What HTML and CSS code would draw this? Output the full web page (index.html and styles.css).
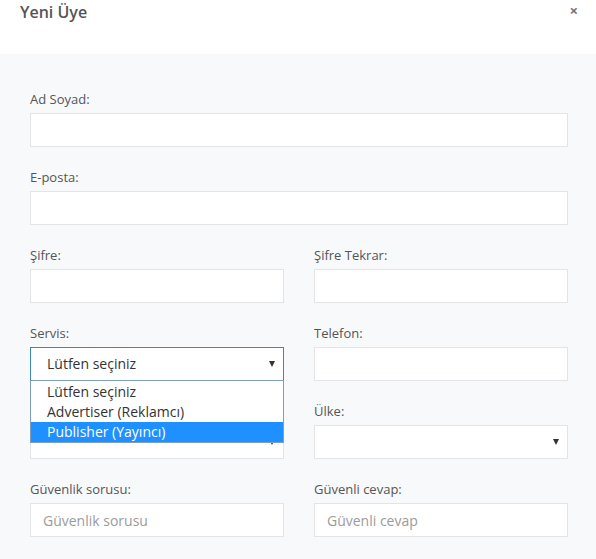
FILE: index.html
```html
<!DOCTYPE html>
<html lang="tr">
<head>
<meta charset="utf-8">
<title>Yeni Üye</title>
<link rel="stylesheet" href="styles.css">
</head>
<body>
<div class="modal">
  <div class="modal-header">
    <h4 class="modal-title">Yeni Üye</h4>
    <span class="close">×</span>
  </div>
  <div class="modal-body">
    <div class="field">
      <label class="label">Ad Soyad:</label>
      <input class="input" type="text">
    </div>
    <div class="field">
      <label class="label">E-posta:</label>
      <input class="input" type="text">
    </div>
    <div class="row">
      <div class="field">
        <label class="label">Şifre:</label>
        <input class="input" type="password">
      </div>
      <div class="field">
        <label class="label">Şifre Tekrar:</label>
        <input class="input" type="password">
      </div>
    </div>
    <div class="row">
      <div class="field">
        <label class="label">Servis:</label>
        <div class="select-wrap">
          <div class="select focused">Lütfen seçiniz</div>
          <span class="arrow"></span>
          <ul class="dropdown">
            <li class="option">Lütfen seçiniz</li>
            <li class="option">Advertiser (Reklamcı)</li>
            <li class="option selected">Publisher (Yayıncı)</li>
          </ul>
        </div>
      </div>
      <div class="field">
        <label class="label">Telefon:</label>
        <input class="input" type="text">
      </div>
    </div>
    <div class="row">
      <div class="field">
        <label class="label"></label>
        <div class="select-wrap">
          <div class="select"></div>
          <span class="arrow"></span>
        </div>
      </div>
      <div class="field">
        <label class="label">Ülke:</label>
        <div class="select-wrap">
          <div class="select"></div>
          <span class="arrow"></span>
        </div>
      </div>
    </div>
    <div class="row">
      <div class="field">
        <label class="label">Güvenlik sorusu:</label>
        <input class="input" type="text" placeholder="Güvenlik sorusu">
      </div>
      <div class="field">
        <label class="label">Güvenli cevap:</label>
        <input class="input" type="text" placeholder="Güvenli cevap">
      </div>
    </div>
  </div>
</div>
</body>
</html>
```

FILE: styles.css
```css
* { box-sizing: border-box; }
html, body { margin: 0; padding: 0; }
body {
  font-family: "Open Sans", "Noto Sans", sans-serif;
  background: #f8f9fb;
  color: #555;
  width: 596px;
  height: 559px;
  overflow: hidden;
}
.modal-header {
  height: 54px;
  background: #ffffff;
  display: flex;
  justify-content: space-between;
  align-items: flex-start;
  padding: 0 18px 0 20px;
}
.modal-title {
  margin: 0;
  font-size: 16px;
  font-weight: 600;
  line-height: 24px;
  color: #555;
}
.close {
  font-size: 15px;
  font-weight: 700;
  color: #777;
  line-height: 20px;
  margin-top: 0;
}
.modal-body {
  padding: 36px 28px 0 30px;
}
.row {
  display: grid;
  grid-template-columns: 1fr 1fr;
  column-gap: 30px;
}
.field {
  margin-bottom: 21px;
  display: flex;
  flex-direction: column;
}
.label {
  font-size: 13px;
  line-height: 18px;
  height: 18px;
  color: #555;
  margin-bottom: 5px;
}
.input {
  height: 34px;
  width: 100%;
  border: 1px solid #e3e4e6;
  background: #fff;
  padding: 0 12px;
  font-family: inherit;
  font-size: 14px;
  color: #555;
  outline: none;
}
.input::placeholder { color: #9b9b9b; }
.select-wrap { position: relative; }
.select {
  height: 34px;
  border: 1px solid #e3e4e6;
  background: #fff;
  padding: 0 16px;
  font-size: 14px;
  line-height: 32px;
  color: #333;
}
.select.focused { border-color: #3a8ab5; }
.arrow {
  position: absolute;
  right: 9px;
  top: 14px;
  width: 0;
  height: 0;
  border-left: 3px solid transparent;
  border-right: 3px solid transparent;
  border-top: 6px solid #333;
}
.dropdown {
  position: absolute;
  left: 0;
  right: 0;
  top: 33px;
  margin: 0;
  padding: 0;
  list-style: none;
  background: #fff;
  border: 1px solid #7f9dbd;
  z-index: 5;
}
.option {
  font-size: 14px;
  line-height: 20px;
  height: 20px;
  padding: 0 16px;
  color: #333;
}
.option:first-child { margin-top: 1px; }
.option.selected {
  background: #1e90ff;
  color: #fff;
}
```
